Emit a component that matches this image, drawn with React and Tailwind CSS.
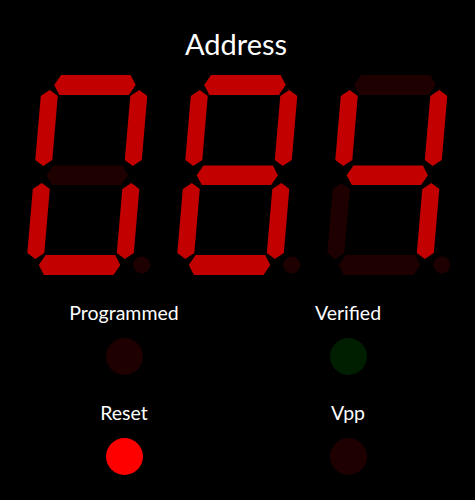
import React from "react";

const ON = "#c20000";
const OFF = "#1e0000";

// unslanted local geometry
const H = (x1, x2, yc, h, c) =>
  `${x1},${yc} ${x1 + c},${yc - h / 2} ${x2 - c},${yc - h / 2} ${x2},${yc} ${x2 - c},${yc + h / 2} ${x1 + c},${yc + h / 2}`;
const V = (xc, y1, y2, w, c) =>
  `${xc},${y1} ${xc + w / 2},${y1 + c} ${xc + w / 2},${y2 - c} ${xc},${y2} ${xc - w / 2},${y2 - c} ${xc - w / 2},${y1 + c}`;

const SEGS = {
  a: H(26.5, 108, 15, 20, 6),
  b: V(112, 20, 96, 17, 6),
  c: V(112, 113, 189, 17, 6),
  d: H(26.5, 108, 195, 20, 6),
  e: V(22.5, 113, 189, 17, 6),
  f: V(22.5, 20, 96, 17, 6),
  g: H(26.7, 108, 105.3, 19.5, 6),
};

function Digit({ on }) {
  return (
    <svg width="150" height="210" viewBox="0 0 150 210" className="block shrink-0">
      <g transform="translate(0,105) skewX(-4.9) translate(0,-105)">
        {Object.entries(SEGS).map(([k, pts]) => (
          <polygon key={k} points={pts} fill={on.includes(k) ? ON : OFF} strokeLinejoin="round" />
        ))}
      </g>
      <circle cx="121.7" cy="195" r="8.5" fill={OFF} />
    </svg>
  );
}

function Led({ label, color }) {
  return (
    <div className="flex flex-col items-center">
      <div className="text-[19.5px] leading-[19px] text-white">{label}</div>
      <div className="mt-[16px] h-[37px] w-[37px] rounded-full" style={{ backgroundColor: color }} />
    </div>
  );
}

export default function App() {
  return (
    <div
      className="h-[500px] w-[475px] overflow-hidden bg-black"
      style={{ fontFamily: "Lato, 'Open Sans', sans-serif" }}
    >
      <div className="w-[472px] pt-[29px] text-center text-[29px] leading-[29px] text-white">Address</div>
      <div className="ml-[20px] mt-[12px] flex">
        <Digit on="abcdef" />
        <Digit on="abcdefg" />
        <Digit on="bcfg" />
      </div>
      <div className="ml-[12px] mt-[23px] grid grid-cols-[224px_224px] gap-y-[28px]">
        <Led label="Programmed" color="#1e0000" />
        <Led label="Verified" color="#001e00" />
        <Led label="Reset" color="#ff0000" />
        <Led label="Vpp" color="#1e0000" />
      </div>
    </div>
  );
}
